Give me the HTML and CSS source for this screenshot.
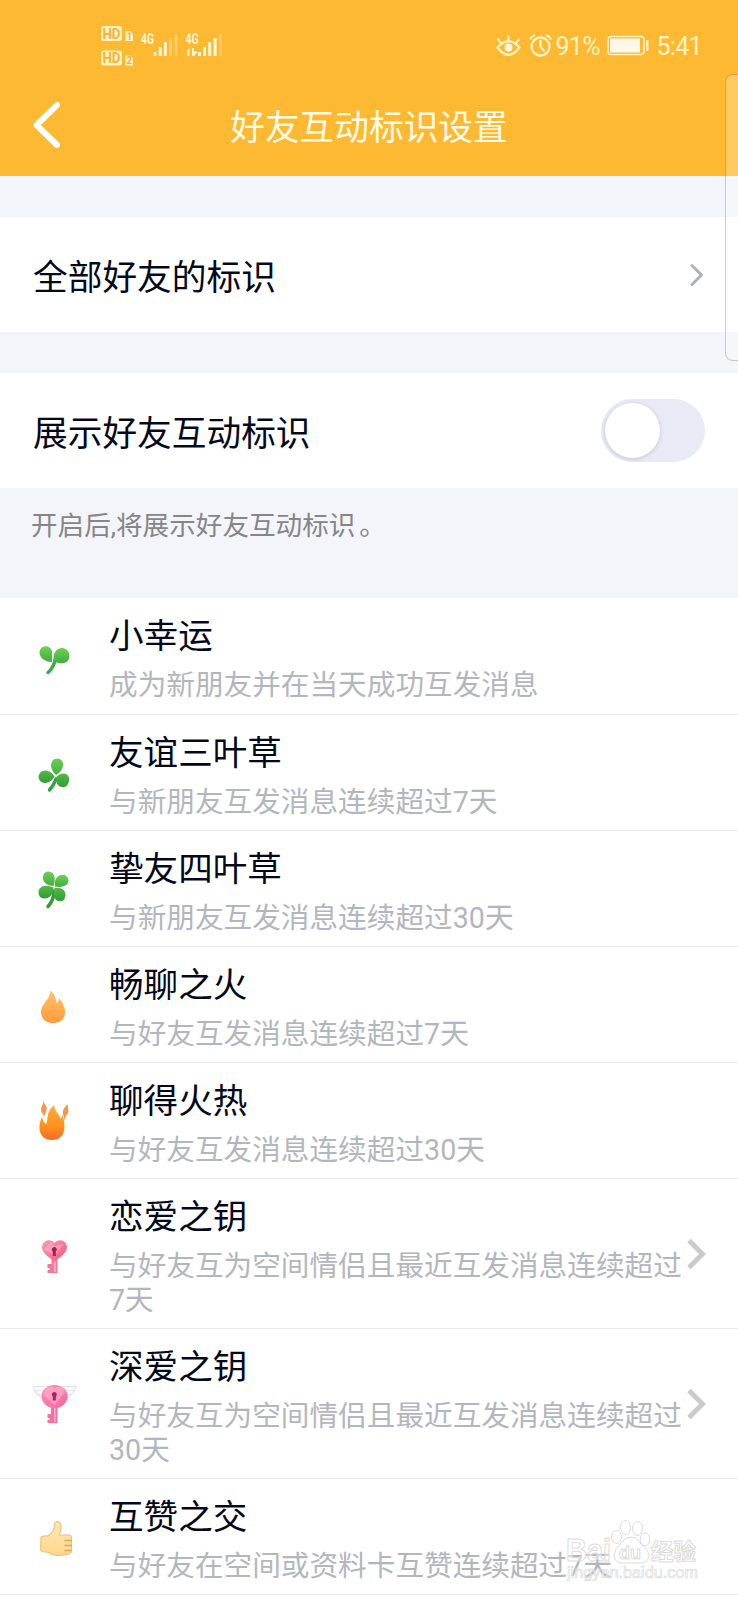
FILE: index.html
```html
<!DOCTYPE html>
<html lang="zh-CN">
<head>
<meta charset="utf-8">
<title>好友互动标识设置</title>
<link rel="stylesheet" href="styles.css">
</head>
<body>
<svg class="defs" width="0" height="0" aria-hidden="true">
  <defs>
    <linearGradient id="leaf" x1="0" y1="0" x2="0" y2="1"><stop offset="0" stop-color="#6fd052"/><stop offset="1" stop-color="#41ad43"/></linearGradient>
    <linearGradient id="leafDark" x1="0" y1="0" x2="0" y2="1"><stop offset="0" stop-color="#55b945"/><stop offset="1" stop-color="#319d35"/></linearGradient>
    <linearGradient id="flame" x1="0" y1="0" x2="0" y2="1"><stop offset="0" stop-color="#ffc46a"/><stop offset="1" stop-color="#ff9b3c"/></linearGradient>
    <linearGradient id="hot" x1="0" y1="0" x2="0" y2="1"><stop offset="0" stop-color="#ffad35"/><stop offset=".6" stop-color="#ff921f"/><stop offset="1" stop-color="#f96a21"/></linearGradient>
    <linearGradient id="pink" x1="0" y1="0" x2="1" y2="1"><stop offset="0" stop-color="#fb9bb4"/><stop offset="1" stop-color="#f2567f"/></linearGradient>
    <linearGradient id="pink2" x1="0" y1="0" x2="1" y2="1"><stop offset="0" stop-color="#ff91bd"/><stop offset="1" stop-color="#f9639b"/></linearGradient>
    <linearGradient id="skin" x1="0" y1="0" x2="0" y2="1"><stop offset="0" stop-color="#ffe8b4"/><stop offset="1" stop-color="#ffd68c"/></linearGradient>
  </defs>
</svg>

<header class="header">
  <div class="status">
    <svg width="130" height="50" viewBox="98 22 130 50">
      <g fill="#fff2c4">
        <rect x="101" y="26" width="21" height="15" rx="3"/>
        <rect x="101" y="50.500" width="21" height="15" rx="3"/>
        <path d="M125.500 31h5l2.500 3v7h-7.500zM125.500 55.500h5l2.500 3v7h-7.500z"/>
      </g>
      <g class="badge-text">
        <text x="102.500" y="38.500" textLength="18" lengthAdjust="spacingAndGlyphs">HD</text>
        <text x="102.500" y="63" textLength="18" lengthAdjust="spacingAndGlyphs">HD</text>
        <text class="sim" x="126.500" y="39.500">1</text>
        <text class="sim" x="126.500" y="64">2</text>
      </g>
      <g class="net-text">
        <text x="141" y="44" textLength="13" lengthAdjust="spacingAndGlyphs">4G</text>
        <text x="185.500" y="44" textLength="13" lengthAdjust="spacingAndGlyphs">4G</text>
      </g>
      <g fill="#fff6d6">
        <path d="M153.500 52h3v4h-3zM158.700 47h3v9h-3zM163.800 42h3v14h-3z"/>
        <path opacity=".3" d="M169 38h3v18h-3zM174.500 34h3v22h-3z"/>
        <path d="M198 52h3v4h-3zM203 47h3v9h-3zM208.200 42h3v14h-3zM213.600 38h3v18h-3z"/>
        <path opacity=".3" d="M219 34h3v22h-3z"/>
        <path d="M186 52l3.500-4v8h-2v-5zM192 48h2v3l3.500 1-3.500 4h-2z"/>
      </g>
    </svg>
    <svg width="212" height="30" viewBox="494 30 212 30">
      <g fill="none" stroke="#fff2c4" stroke-width="2.300" stroke-linecap="round">
        <path d="M497.500 47.500Q508.500 35 519.500 47.500Q508.500 62 497.500 47.500zM508.500 36.500v3.500M498 39.500l3 3.500M519 39.500l-3 3.500"/>
        <circle cx="540.500" cy="46.500" r="9"/>
        <path d="M540.500 41v6l3.500 3.500M530.500 38.500q1-2 3.500-3M550.500 38.500q-1-2-3.500-3"/>
        <rect x="608" y="36.500" width="36" height="18" rx="3" stroke-width="1.500"/>
      </g>
      <circle cx="508.500" cy="47.500" r="4" fill="#fff6e0"/>
      <rect x="610" y="38.500" width="30" height="14" fill="#fff8ea"/>
      <rect x="646" y="40" width="2.500" height="11" rx="1" fill="#fff2c4"/>
      <text class="status-text" x="555.500" y="55" textLength="45">91%</text>
      <text class="status-text" x="656.500" y="55" textLength="46">5:41</text>
    </svg>
  </div>
  <div class="titlebar">
    <svg class="back" width="30" height="50" viewBox="0 0 30 50"><path d="M25 5L4.500 25l20.500 20" fill="none" stroke="#fff" stroke-width="6" stroke-linecap="round" stroke-linejoin="round"/></svg>
    <h1 class="title">好友互动标识设置</h1>
  </div>
</header>

<section class="setting">
  <span>全部好友的标识</span>
  <svg width="16" height="26" viewBox="0 0 16 26"><path d="M3 3.500L12.500 13 3 22.500" fill="none" stroke="#afb1b9" stroke-width="3" stroke-linecap="round" stroke-linejoin="round"/></svg>
</section>
<section class="setting">
  <span>展示好友互动标识</span>
  <span class="toggle"><span class="knob"></span></span>
</section>
<p class="note">开启后,将展示好友互动标识<span class="stop">。</span></p>

<main class="list">
  <article class="item first">
    <svg class="icon" width="50" height="60" viewBox="0 0 50 60">
      <path d="M25 32q-1.500 8-7 12.500" fill="none" stroke="#3fa84b" stroke-width="3.500" stroke-linecap="round"/>
      <path d="M22 34C13 34 9 28 9.500 23.500C11 16.500 20 16.500 22 23C22.500 27 22 30 22 34z" fill="url(#leaf)"/>
      <path d="M23.500 34C23 25 26 20 32 20C41 21 41.500 32 35.500 34.500C31 36 27 34.500 23.500 34z" fill="url(#leaf)"/>
    </svg>
    <div class="text"><h2>小幸运</h2><p>成为新朋友并在当天成功互发消息</p></div>
  </article>
  <article class="item">
    <svg class="icon" width="50" height="60" viewBox="0 0 50 60">
      <path d="M26 35q-2 6-6.500 11" fill="none" stroke="#36a044" stroke-width="3.500" stroke-linecap="round"/>
      <path d="M26 31C19 25 19.500 15 27 14.500C35.500 15 35 26 26 31z" fill="url(#leaf)"/>
      <path d="M24.500 32.500C20 41 9 41 8.500 32.500C10 24.500 20 24.500 24.500 32.500z" fill="url(#leafDark)"/>
      <path d="M26 33.500C30 28 38 28.500 39 34C40 41 35 44.500 30 42.500C26 40.500 26.500 37 26 33.500z" fill="url(#leafDark)"/>
    </svg>
    <div class="text"><h2>友谊三叶草</h2><p>与新朋友互发消息连续超过7天</p></div>
  </article>
  <article class="item">
    <svg class="icon" width="50" height="60" viewBox="0 0 50 60">
      <path d="M24 31q0 9-6 15.500" fill="none" stroke="#309d36" stroke-width="3.500" stroke-linecap="round"/>
      <path d="M23.500 26C14 25.500 11 19 14 13.500C19 8.500 28 13 23.500 26z" fill="url(#leaf)"/>
      <path d="M25 26.500C23.500 18 29 13.500 35 15C42 19.500 38.500 29 25 26.500z" fill="url(#leaf)"/>
      <path d="M23.500 27.500C24 36.500 16 41 10 37C5 28.500 13 22.500 23.500 27.500z" fill="url(#leafDark)"/>
      <path d="M24.500 28C35 26.500 37.500 34 34 40C27 44 22 38.500 24.500 28z" fill="url(#leafDark)"/>
    </svg>
    <div class="text"><h2>挚友四叶草</h2><p>与新朋友互发消息连续超过30天</p></div>
  </article>
  <article class="item">
    <svg class="icon" width="50" height="60" viewBox="0 0 50 60">
      <path d="M20.500 14.500C24 17.500 26 21 26.500 27C28.500 26 29 24 28.500 22C33 26 35 31 35 36C35 43 30 47 23 47C16 47 11 43 11 36C11 28 20 24 20.500 14.500z" fill="url(#flame)"/>
    </svg>
    <div class="text"><h2>畅聊之火</h2><p>与好友互发消息连续超过7天</p></div>
  </article>
  <article class="item">
    <svg class="icon" width="50" height="60" viewBox="0 0 50 60">
      <path d="M24.500 13C23.500 19 30 22 30.500 27Q32 26 32 22C37 35 35 48 22 48C9 48 7 35 12 25Q13 30 16 32C19 28 15 20 24.500 13z" fill="url(#hot)"/>
      <path d="M13 7.500C14 13 18 14 16.500 18Q15 21 14.500 24.500Q9 18 12 14Q14 11 13 7.500zM37.500 12C38 18 40 20 36 24L34 29C35 24 32 23 33 19Q33 17 37.500 12z" fill="#f5964c"/>
    </svg>
    <div class="text"><h2>聊得火热</h2><p>与好友互发消息连续超过30天</p></div>
  </article>
  <article class="item tall">
    <svg class="icon" width="50" height="60" viewBox="0 0 50 60">
      <path d="M21.500 32h6v15h-10v-3h2v-2h-2v-4h4z" fill="#f3799a"/><path d="M24 34h1.500v12H24z" fill="#ffb9c9"/>
      <path d="M24.500 17C28 12.500 36 13.500 37 21C37 28 29 31 24.500 36C20 31 12 28 12 21C13 13.500 21 12.500 24.500 17z" fill="url(#pink)"/>
      <path d="M14 23l7-7 3.500 4 9-2-9 12z" fill="#ffc0cf" opacity=".45"/>
      <path d="M24.300 21a2.500 2.500 0 0 1 1.500 4.500V30h-3v-4.500A2.500 2.500 0 0 1 24.300 21z" fill="#a91f4c"/>
    </svg>
    <div class="text"><h2>恋爱之钥</h2><p>与好友互为空间情侣且最近互发消息连续超过7天</p></div>
    <svg class="arrow" width="22" height="34" viewBox="0 0 22 34"><path d="M3 3.500L16.500 17 3 30.500" fill="none" stroke="#cbcbcb" stroke-width="5"/></svg>
  </article>
  <article class="item tall">
    <svg class="icon" width="50" height="60" viewBox="0 0 50 60">
      <path d="M12 22Q5 18 3 10.500H18M37 22Q44 18 46 10.500H31M5 14.500H14M35 14.500H44M8 18.500H13M36 18.500H41" fill="#fafafa" stroke="#e4e4e7" stroke-width="1.100"/>
      <path d="M21 29h6.500v18H17.500v-3h2v-2h-2v-4H21z" fill="#f9709f"/><path d="M24 30h1.500v16H24z" fill="#ffb3d0"/>
      <ellipse cx="24.500" cy="20.500" rx="13" ry="11.500" fill="url(#pink2)"/>
      <path d="M24.500 12C28 9 35 12 35 16L24.500 29 14 19C13 13 21 8 24.500 12z" fill="#ffbdd6" opacity=".5"/>
      <path d="M24.300 16a2.500 2.500 0 0 1 1.500 4.500V24.500h-3v-4A2.500 2.500 0 0 1 24.300 16z" fill="#a3235e"/>
    </svg>
    <div class="text"><h2>深爱之钥</h2><p>与好友互为空间情侣且最近互发消息连续超过30天</p></div>
    <svg class="arrow" width="22" height="34" viewBox="0 0 22 34"><path d="M3 3.500L16.500 17 3 30.500" fill="none" stroke="#cbcbcb" stroke-width="5"/></svg>
  </article>
  <article class="item">
    <svg class="icon" width="50" height="60" viewBox="0 0 50 60">
      <path d="M11 29Q14 27.500 18 28Q24 24 24.500 17Q24.500 13.500 28 13.500Q31.500 15 31 20L29.500 27H39Q42 27.500 41.500 31V43Q41 46 37 46.500L30 47.500Q22 47.500 19 44.500L12 43.500Q10.500 43 10.500 41z" fill="url(#skin)" stroke="#edc27a" stroke-width="1.100" stroke-linejoin="round"/>
      <path d="M35 32.500h6.500M35 37.500h6.500M35 42.500h6" fill="none" stroke="#dca850" stroke-width="1.300" stroke-linecap="round"/>
    </svg>
    <div class="text"><h2>互赞之交</h2><p>与好友在空间或资料卡互赞连续超过7天</p></div>
  </article>
</main>

<div class="side-panel"></div>
<svg class="watermark" width="140" height="70" viewBox="562 1516 140 70">
  <g fill="#fff" fill-opacity=".45" stroke="#dcdcdc" stroke-width="1">
    <text class="wm-logo" x="566" y="1561" textLength="45" lengthAdjust="spacingAndGlyphs">Bai</text>
    <ellipse cx="616.500" cy="1537" rx="5" ry="6.500"/><ellipse cx="625.500" cy="1527.500" rx="5" ry="7"/><ellipse cx="637.500" cy="1528.500" rx="5" ry="7"/><ellipse cx="645" cy="1539.500" rx="4.800" ry="6.500"/>
    <path d="M631 1537Q637 1537 640 1543Q649 1550 649 1556Q648 1563 640 1563H621Q614 1562 614 1555Q615 1548 621 1543Q625 1537 631 1537z"/>
    <text class="wm-du" x="619" y="1559" textLength="22" lengthAdjust="spacingAndGlyphs">du</text>
    <text class="wm-cn" x="651" y="1560" textLength="45">经验</text>
    <text class="wm-url" x="567" y="1578" textLength="131" lengthAdjust="spacingAndGlyphs">jingyan.baidu.com</text>
  </g>
</svg>
</body>
</html>
```
FILE: styles.css
```css
* { box-sizing: border-box; }
body {
  margin: 0;
  width: 738px;
  height: 1600px;
  overflow: hidden;
  position: relative;
  background: #f4f5fa;
  color: #03081a;
  font-family: Roboto, "Noto Sans CJK SC", sans-serif;
}
h1, h2, p { margin: 0; font-weight: 400; }
svg { display: block; flex: none; }
.defs { position: absolute; }

.header { height: 176px; background: #feb932; }
.status {
  display: flex;
  justify-content: space-between;
  height: 100px;
  padding: 22px 32px 0 98px;
}
.status svg:last-child { margin-top: 8px; }
.badge-text { font-size: 14px; font-weight: 700; fill: #f5b43a; }
.badge-text .sim { font-size: 10px; }
.net-text { font-size: 15px; font-weight: 700; fill: #fff6d6; }
.status-text { font-size: 25px; fill: #fff2c4; }
.titlebar { display: flex; height: 50px; padding: 0 32px; }
.title {
  flex: 1;
  margin-right: 30px;
  text-align: center;
  font-size: 34.7px;
  line-height: 57px;
  color: #fffbe6;
}

.setting {
  display: flex;
  align-items: center;
  justify-content: space-between;
  height: 115px;
  margin-top: 41px;
  padding: 0 33px;
  background: #fff;
  font-size: 34.7px;
}
.toggle {
  width: 104px;
  height: 63px;
  padding: 4px;
  border-radius: 32px;
  background: #e8ebf5;
}
.knob {
  display: block;
  width: 55px;
  height: 55px;
  border-radius: 50%;
  background: #fff;
  box-shadow: 0 1px 4px rgba(40, 45, 80, .2);
}
.note {
  height: 110px;
  padding: 18px 31px 0;
  font-size: 26.6px;
  line-height: 40px;
  color: #858687;
}
.stop { margin-left: 4px; }

.list { background: #fff; height: 1002px; }
.item {
  display: flex;
  height: 116px;
  padding-left: 30px;
  border-bottom: 1px solid #ebebed;
}
.item.first { height: 117px; }
.item.tall { height: 150px; }
.icon { margin-top: 29px; }
.first .icon { margin-top: 30px; }
.tall .icon { margin-top: 47px; }
.text { width: 577px; margin-left: 29px; padding-top: 18px; }
.text h2 { font-size: 34.6px; line-height: 40px; }
.text p {
  margin-top: 12px;
  font-size: 28.65px;
  line-height: 34px;
  color: #b4b6be;
}
.arrow { margin: 58px 0 0; }

.side-panel {
  position: absolute;
  left: 725px;
  top: 74px;
  width: 20px;
  height: 287px;
  border: 1px solid rgba(60, 60, 50, .25);
  border-radius: 8px;
  background: rgba(255, 255, 255, .23);
}
.watermark { position: absolute; left: 562px; top: 1516px; }
.wm-logo { font: 700 31px "Liberation Sans", sans-serif; }
.wm-du { font: 700 19px "Liberation Sans", sans-serif; }
.wm-cn { font: 700 22.5px "Noto Sans CJK SC", sans-serif; }
.wm-url { font: 400 16px "Liberation Sans", sans-serif; stroke-width: .7px; }
```
